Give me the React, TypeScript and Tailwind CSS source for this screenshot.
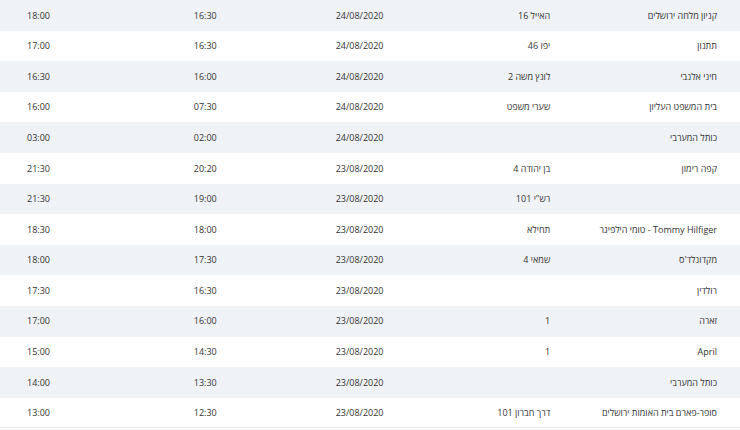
const rows = [
  { place: "קניון מלחה ירושלים", address: "האייל 16", date: "24/08/2020", from: "16:30", to: "18:00" },
  { place: "תתנון", address: "יפו 46", date: "24/08/2020", from: "16:30", to: "17:00" },
  { place: "חיני אלנבי", address: "לונץ משה 2", date: "24/08/2020", from: "16:00", to: "16:30" },
  { place: "בית המשפט העליון", address: "שערי משפט", date: "24/08/2020", from: "07:30", to: "16:00" },
  { place: "כותל המערבי", address: "", date: "24/08/2020", from: "02:00", to: "03:00" },
  { place: "קפה רימון", address: "בן יהודה 4", date: "23/08/2020", from: "20:20", to: "21:30" },
  { place: "", address: "רש\"י 101", date: "23/08/2020", from: "19:00", to: "21:30" },
  { place: "Tommy Hilfiger - טומי הילפיגר", address: "תחילא", date: "23/08/2020", from: "18:00", to: "18:30" },
  { place: "מקדונלד'ס", address: "שמאי 4", date: "23/08/2020", from: "17:30", to: "18:00" },
  { place: "רולדין", address: "", date: "23/08/2020", from: "16:30", to: "17:30" },
  { place: "זארה", address: "1", date: "23/08/2020", from: "16:00", to: "17:00" },
  { place: "April", address: "1", date: "23/08/2020", from: "14:30", to: "15:00" },
  { place: "כותל המערבי", address: "", date: "23/08/2020", from: "13:30", to: "14:00" },
  { place: "סופר-פארם בית האומות ירושלים", address: "דרך חברון 101", date: "23/08/2020", from: "12:30", to: "13:00" },
];

export default function App() {
  return (
    <div
      dir="rtl"
      className="h-[430px] w-[740px] overflow-hidden bg-white text-[9px] text-[#333] font-['Open_Sans',sans-serif]"
    >
      {rows.map((r, i) => (
        <div
          key={i}
          className={
            "grid h-[30.6px] grid-cols-[166.75px_166.75px_166.75px_166.75px_1fr] items-center " +
            (i % 2 === 0 ? "bg-[#eff2f6]" : "bg-white") +
            (i === rows.length - 1 ? " border-b border-[#e6eaee]" : "")
          }
        >
          <div className="pr-[23px] text-right whitespace-nowrap">{r.place}</div>
          <div className="pr-[23px] text-right whitespace-nowrap">{r.address}</div>
          <div className="pr-[23px] text-right whitespace-nowrap">{r.date}</div>
          <div className="pr-[23px] text-right whitespace-nowrap">{r.from}</div>
          <div className="pr-[23px] text-right whitespace-nowrap">{r.to}</div>
        </div>
      ))}
    </div>
  );
}
